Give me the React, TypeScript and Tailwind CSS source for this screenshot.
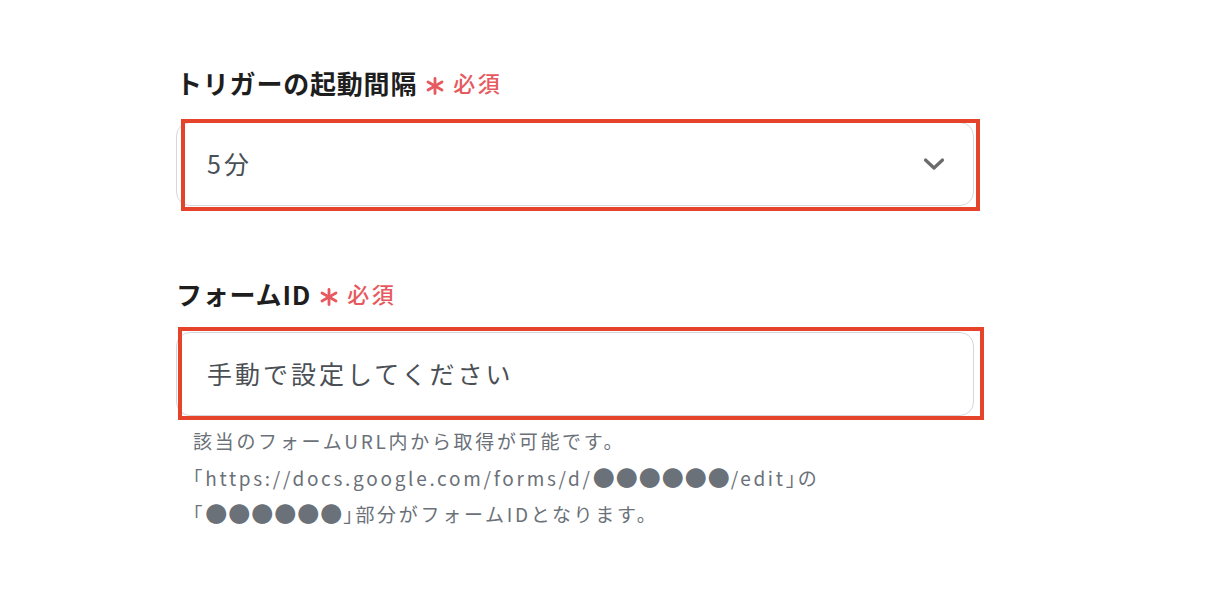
import React from 'react';

const font = { fontFamily: '"Noto Sans CJK JP", "Noto Sans", sans-serif' };

const Required = () => (
    <span className="ml-[9px] flex items-center gap-[9px] text-[#e65a5f]">
        <svg width="18" height="18" viewBox="0 0 18 18" className="mt-[7px]">
            <g stroke="#e65a5f" strokeWidth="2.8" strokeLinecap="round">
                <line x1="9" y1="1.5" x2="9" y2="16.5" />
                <line x1="2" y1="5" x2="16" y2="13" />
                <line x1="2" y1="13" x2="16" y2="5" />
            </g>
        </svg>
        <span className="text-[22px] font-medium tracking-[2.5px]">必須</span>
    </span>
);

const Field = ({ label, children }: { label: string; children: React.ReactNode }) => (
    <div>
        <div className="flex h-[28px] items-center">
            <span className="text-[26px] font-bold tracking-[0.8px] text-[#1e1e1e]">{label}</span>
            <Required />
        </div>
        {children}
    </div>
);

const Dots = () => <span className="text-[22px] tracking-[1px]">●●●●●●</span>;

export default function App() {
    return (
        <div className="h-[610px] w-[1220px] bg-white" style={font}>
            <div className="w-[974px] pl-[176px] pt-[68px]">
                <Field label="トリガーの起動間隔">
                    <div className="relative mt-[26px]">
                        <div className="flex h-[84px] items-center justify-between rounded-[14px] border-[1.5px] border-[#d3d7dc] bg-white pl-[30px] pr-[27px]">
                            <span className="text-[25px] tracking-[3px] text-[#4a4f55]">5分</span>
                            <svg width="24" height="24" viewBox="0 0 24 24">
                                <polyline points="3.5,8 12,16 20.5,8" fill="none" stroke="#6b6b6b" strokeWidth="3.2" strokeLinecap="round" strokeLinejoin="round" />
                            </svg>
                        </div>
                        <div className="pointer-events-none absolute -top-[3px] -bottom-[5px] left-[5px] -right-[6px] border-4 border-[#e6432b]" />
                    </div>
                </Field>

                <div className="mt-[73px]">
                    <Field label="フォームID">
                        <div className="relative mt-[25px]">
                            <div className="flex h-[84px] items-center rounded-[14px] border-[1.5px] border-[#d3d7dc] bg-white pl-[30px]">
                                <span className="text-[25px] tracking-[3px] text-[#4a4f55]">手動で設定してください</span>
                            </div>
                            <div className="pointer-events-none absolute -top-[5px] -bottom-[4px] left-[2px] -right-[10px] border-4 border-[#e6432b]" />
                        </div>
                        <div className="mt-[8px] pl-[17px] text-[19px] leading-[34.5px] tracking-[2.7px] text-[#6b7178]">
                            <p>該当のフォームURL内から取得が可能です。</p>
                            <p>｢https://docs.google.com/forms/d/<Dots />/edit｣の</p>
                            <p>｢<Dots />｣部分がフォームIDとなります。</p>
                        </div>
                    </Field>
                </div>
            </div>
        </div>
    );
}
